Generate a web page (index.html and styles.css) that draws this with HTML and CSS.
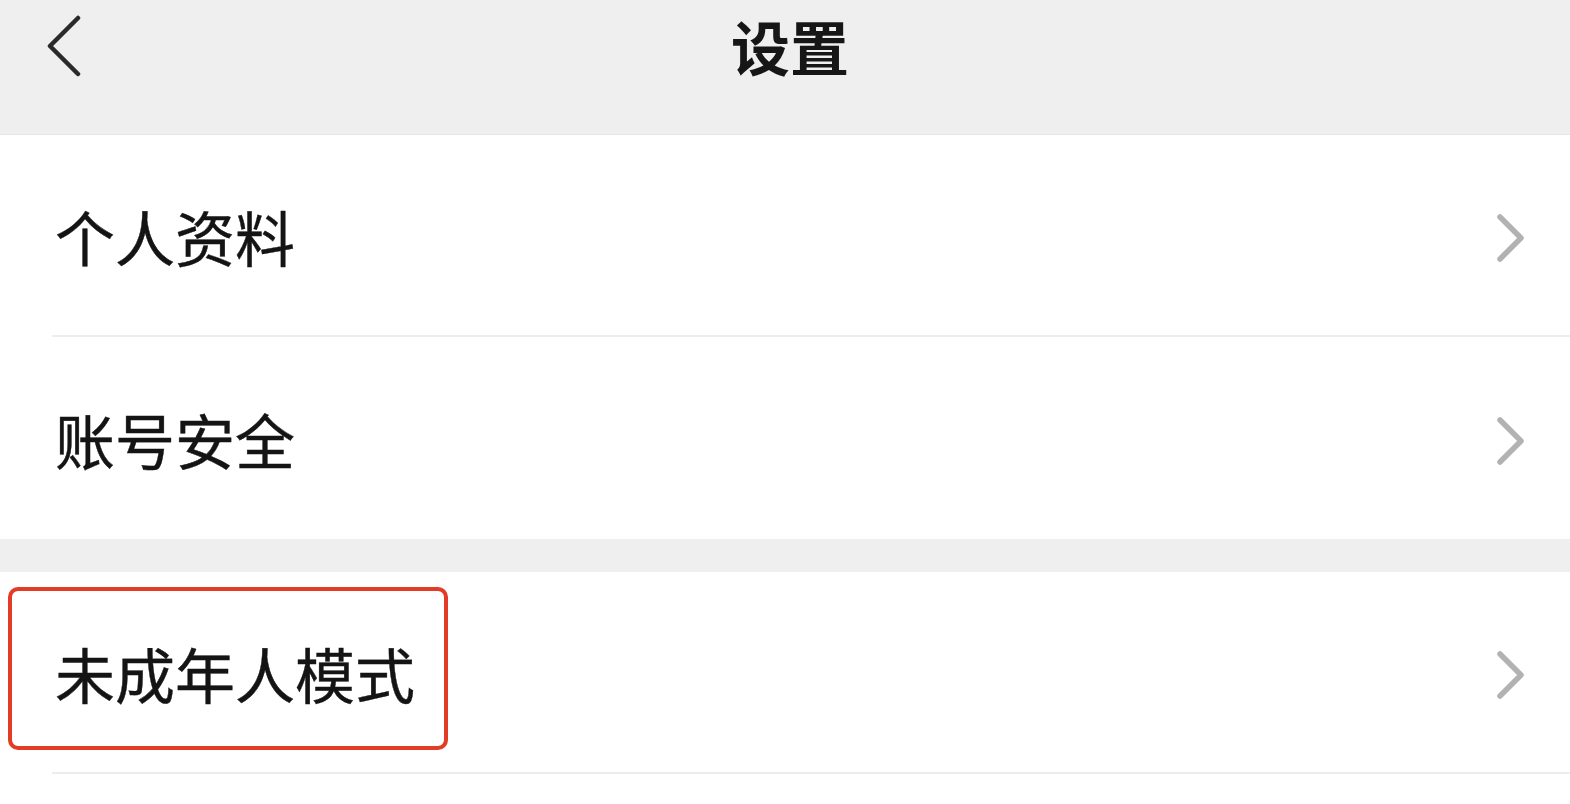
FILE: index.html
```html
<!DOCTYPE html>
<html lang="zh-CN">
<head>
<meta charset="utf-8">
<title>设置</title>
<link rel="stylesheet" href="styles.css">
</head>
<body>
<div class="page">
  <header class="nav">
    <svg class="back" width="40" height="66" viewBox="0 0 40 66">
      <polyline points="32,3 4,31 32,59" fill="none" stroke="#2a2a2a" stroke-width="4.5" stroke-linecap="round" stroke-linejoin="round"/>
    </svg>
    <h1 class="title">设置</h1>
  </header>
  <section class="group">
    <div class="row">
      <span class="label">个人资料</span>
      <svg class="chev" width="32" height="50" viewBox="0 0 32 50"><polyline points="4,4 25,25 4,46" fill="none" stroke="#b2b2b2" stroke-width="5.5" stroke-linecap="round" stroke-linejoin="round"/></svg>
    </div>
    <div class="row last">
      <span class="label">账号安全</span>
      <svg class="chev" width="32" height="50" viewBox="0 0 32 50"><polyline points="4,4 25,25 4,46" fill="none" stroke="#b2b2b2" stroke-width="5.5" stroke-linecap="round" stroke-linejoin="round"/></svg>
    </div>
  </section>
  <div class="gap"></div>
  <section class="group">
    <div class="row">
      <span class="label">未成年人模式</span>
      <svg class="chev" width="32" height="50" viewBox="0 0 32 50"><polyline points="4,4 25,25 4,46" fill="none" stroke="#b2b2b2" stroke-width="5.5" stroke-linecap="round" stroke-linejoin="round"/></svg>
      <div class="highlight"></div>
    </div>
  </section>
</div>
</body>
</html>
```
FILE: styles.css
```css
* { box-sizing: border-box; }
html, body { margin: 0; padding: 0; }
body {
  background: #ffffff;
  font-family: "Noto Sans CJK SC", "Noto Sans", sans-serif;
  color: #111111;
}
.page { width: 1570px; }
.nav {
  height: 135px;
  background: #efefef;
  position: relative;
  display: flex;
  align-items: center;
  justify-content: center;
  padding-left: 10px;
  border-bottom: 1px solid #e6e6e6;
}
.back {
  position: absolute;
  left: 46px;
  top: 15px;
}
.title {
  margin: 0;
  margin-top: -44px;
  font-size: 59px;
  font-weight: 700;
  letter-spacing: 0;
  color: #161616;
}
.group { background: #ffffff; }
.row {
  position: relative;
  height: 202px;
  margin-left: 52px;
  padding-left: 3px;
  padding-right: 42px;
  display: flex;
  align-items: center;
  justify-content: space-between;
  border-bottom: 2px solid #ededed;
}
.row.last { border-bottom: none; }
.label {
  font-size: 60px;
  font-weight: 400;
  -webkit-text-stroke: 0.4px #141414;
  line-height: 1;
  margin-top: 2px;
  color: #141414;
}
.chev { display: block; margin-top: 6px; }
.gap {
  height: 33px;
  background: #efefef;
}
.highlight {
  position: absolute;
  left: -44px;
  top: 15px;
  width: 440px;
  height: 163px;
  border: 4px solid #e23b26;
  border-radius: 10px;
}
```
